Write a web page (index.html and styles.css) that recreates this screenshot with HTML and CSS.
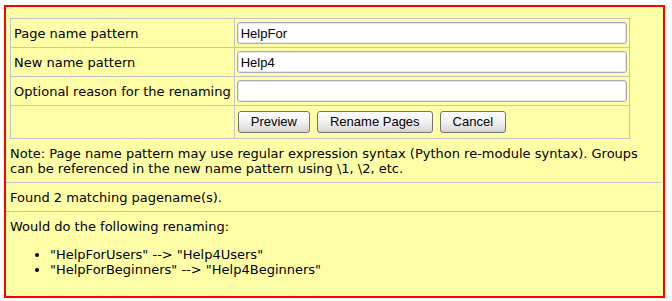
FILE: index.html
```html
<!DOCTYPE html>
<html>
<head>
<meta charset="utf-8">
<title>Rename Pages</title>
<link rel="stylesheet" href="styles.css">
</head>
<body>
<div class="panel">
  <form class="form">
    <table class="fields">
      <tr>
        <td class="label">Page name pattern</td>
        <td class="field"><input class="text" type="text" value="HelpFor"></td>
      </tr>
      <tr>
        <td class="label">New name pattern</td>
        <td class="field"><input class="text" type="text" value="Help4"></td>
      </tr>
      <tr>
        <td class="label">Optional reason for the renaming</td>
        <td class="field"><input class="text" type="text" value=""></td>
      </tr>
      <tr>
        <td class="label"></td>
        <td class="field buttons-cell">
          <div class="buttons">
            <button type="button" class="btn">Preview</button>
            <button type="button" class="btn">Rename Pages</button>
            <button type="button" class="btn">Cancel</button>
          </div>
        </td>
      </tr>
    </table>
  </form>
  <div class="msg">Note: Page name pattern may use regular expression syntax (Python re-module syntax). Groups can be referenced in the new name pattern using \1, \2, etc.</div>
  <div class="msg">Found 2 matching pagename(s).</div>
  <div class="msg last">
    Would do the following renaming:
    <ul class="renames">
      <li>"HelpForUsers" --&gt; "Help4Users"</li>
      <li>"HelpForBeginners" --&gt; "Help4Beginners"</li>
    </ul>
  </div>
</div>
</body>
</html>
```

FILE: styles.css
```css
html, body {
  margin: 0;
  padding: 0;
  background: #ffffff;
}

body {
  font-family: "DejaVu Sans", Verdana, sans-serif;
  font-size: 13px;
  line-height: 15px;
  color: #000000;
}

.panel {
  margin: 5px 7px 0 4px;
  border: 2px solid #ff0000;
  background: #ffffa8;
  padding: 0 2px 3px 0;
}

.form {
  margin: 0;
  padding: 11px 0 0 4px;
}

.fields {
  border-collapse: collapse;
}

.fields td {
  border: 1px solid #c4c4c8;
  padding: 3px 2px;
  vertical-align: middle;
}

.fields td.label {
  padding: 0 3px;
  white-space: nowrap;
}

.text {
  display: block;
  box-sizing: border-box;
  width: 390px;
  height: 22px;
  margin: 0;
  padding: 0 3px;
  border: 1px solid #a9abb8;
  border-radius: 3px;
  box-shadow: inset 0 0 0 1px #e6e6f0;
  background: #ffffff;
  font-family: "Liberation Sans", Arial, sans-serif;
  font-size: 13px;
  color: #000000;
  outline: none;
}

.fields td.buttons-cell {
  padding: 5px 2px;
}

.buttons {
  display: flex;
  gap: 7px;
  margin-left: 1px;
}

.btn {
  box-sizing: border-box;
  height: 22px;
  margin: 0;
  padding: 0 12px 1px;
  border: 1px solid #747474;
  border-radius: 3px;
  background: linear-gradient(#ffffff 0%, #f3f3f3 45%, #dedede 85%, #cfcfcf 100%);
  font-family: "Liberation Sans", Arial, sans-serif;
  font-size: 13px;
  color: #000000;
}

.msg {
  padding: 7px 4px 6px;
  border-bottom: 1px solid #c4c4c8;
}

.msg.last {
  border-bottom: none;
  padding-bottom: 3px;
}

.renames {
  margin: 13px 0;
  padding-left: 40px;
}
```
